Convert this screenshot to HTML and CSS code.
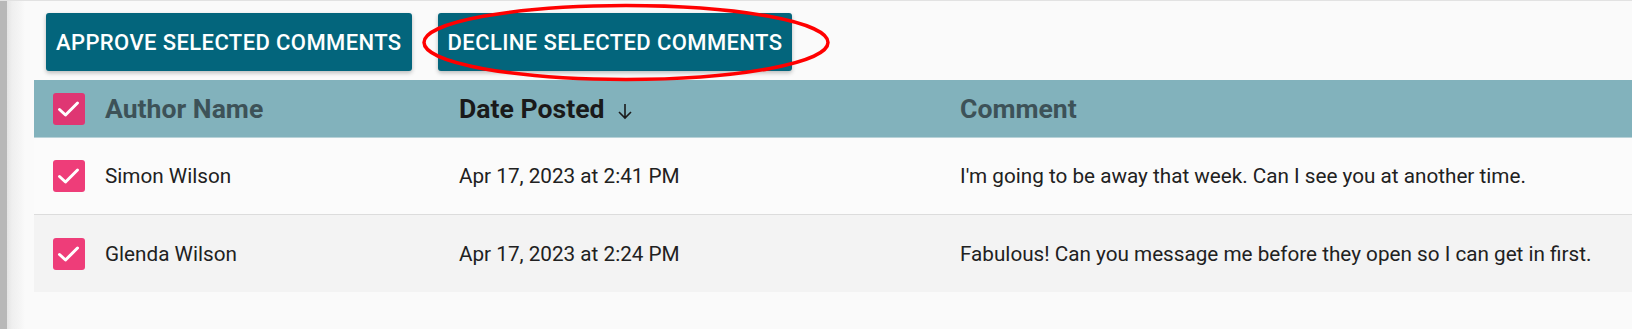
FILE: index.html
```html
<!DOCTYPE html>
<html lang="en">
<head>
    <meta charset="UTF-8">
    <title>Comments</title>
    <link rel="stylesheet" href="styles.css">
</head>
<body>
    <div class="layout">
        <div class="side-edge"></div>
        <main class="content">
            <div class="actions">
                <button class="btn">Approve selected comments</button>
                <button class="btn">Decline selected comments</button>
                <svg class="highlight" width="412" height="84" viewBox="0 0 412 84">
                    <ellipse cx="205" cy="41.5" rx="202" ry="37" fill="none" stroke="#f00" stroke-width="3.5"/>
                </svg>
            </div>

            <div class="grid">
                <div class="row head">
                    <div class="cell check"><span class="box dark"><svg width="32" height="32" viewBox="0 0 32 32"><path d="M6.5 16.5l6 5.5 12-12" fill="none" stroke="#fff" stroke-width="3" stroke-linecap="round" stroke-linejoin="round"/></svg></span></div>
                    <div class="cell">Author Name</div>
                    <div class="cell sorted">Date Posted
                        <svg class="arrow" width="18" height="18" viewBox="0 0 18 18"><path d="M9 2v14M3 10l6 6 6-6" fill="none" stroke="#1b1b1b" stroke-width="1.6"/></svg>
                    </div>
                    <div class="cell">Comment</div>
                </div>
                <div class="row">
                    <div class="cell check"><span class="box"><svg width="32" height="32" viewBox="0 0 32 32"><path d="M6.5 16.5l6 5.5 12-12" fill="none" stroke="#fff" stroke-width="3" stroke-linecap="round" stroke-linejoin="round"/></svg></span></div>
                    <div class="cell">Simon Wilson</div>
                    <div class="cell">Apr 17, 2023 at 2:41 PM</div>
                    <div class="cell">I'm going to be away that week. Can I see you at another time.</div>
                </div>
                <div class="row alt">
                    <div class="cell check"><span class="box"><svg width="32" height="32" viewBox="0 0 32 32"><path d="M6.5 16.5l6 5.5 12-12" fill="none" stroke="#fff" stroke-width="3" stroke-linecap="round" stroke-linejoin="round"/></svg></span></div>
                    <div class="cell">Glenda Wilson</div>
                    <div class="cell">Apr 17, 2023 at 2:24 PM</div>
                    <div class="cell">Fabulous! Can you message me before they open so I can get in first.</div>
                </div>
            </div>
        </main>
    </div>
</body>
</html>
```

FILE: styles.css
```css
body {
    margin: 0;
    background: #fafafa;
    font-family: Roboto, "Liberation Sans", sans-serif;
    color: #212121;
    overflow: hidden;
}
.layout {
    display: flex;
    min-height: 329px;
    border-top: 1px solid #e2e2e2;
}
.side-edge {
    width: 25px;
    flex-shrink: 0;
    background: linear-gradient(to right, #b8b8b8 0, #b8b8b8 7px, #e4e4e4 7px, #efefef 12px, #f5f5f5 20px, #fafafa 25px);
}
.content {
    flex: 1;
    padding-left: 9px;
    min-width: 0;
}
.actions {
    position: relative;
    display: flex;
    gap: 26px;
    padding: 12px 0 9px 12px;
}
.btn {
    background: #03657c;
    color: #fff;
    border: none;
    border-radius: 3px;
    height: 58px;
    padding: 0 10px;
    font-family: Roboto, "Liberation Sans", sans-serif;
    font-size: 22px;
    font-weight: 500;
    letter-spacing: 0.4px;
    text-transform: uppercase;
    box-shadow: 0 2px 4px rgba(0, 0, 0, 0.25);
}
.highlight {
    position: absolute;
    left: 387px;
    top: 0;
}
.grid {
    width: 1640px;
}
.row {
    display: grid;
    grid-template-columns: 71px 354px 501px 1fr;
    align-items: center;
    height: 76px;
    background: #fbfbfb;
    font-size: 20.7px;
    border-bottom: 1px solid #dcdcdc;
}
.row.alt {
    height: 77px;
    background: #f3f3f3;
    border-bottom: none;
}
.row.head {
    height: 57px;
    background: #82b2bc;
    color: #3d5258;
    font-size: 26.6px;
    font-weight: 700;
    border-bottom: 1px solid #b8d2d8;
}
.cell.check {
    padding-left: 19px;
}
.box {
    display: block;
    width: 32px;
    height: 32px;
    border-radius: 3px;
    background: #ee3d79;
}
.box.dark {
    background: #df3673;
}
.box svg {
    display: block;
}
.sorted {
    color: #1a1a1a;
    display: flex;
    align-items: center;
}
.arrow {
    margin-left: 12px;
    margin-top: 4px;
}
```
